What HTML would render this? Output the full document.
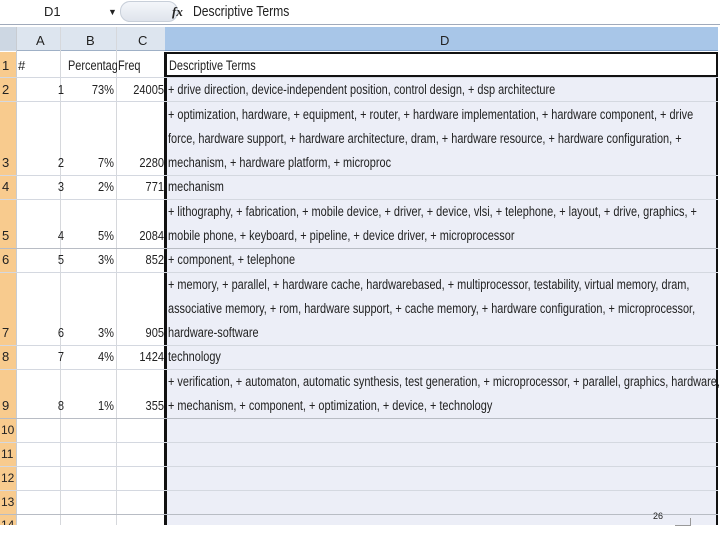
<!DOCTYPE html>
<html><head><meta charset="utf-8"><style>
body{margin:0;width:720px;height:540px;background:#fff;position:relative;overflow:hidden;font-family:"Liberation Sans",sans-serif;font-size:13px;color:#222}
div{position:absolute;box-sizing:border-box}
.t{white-space:nowrap;height:16px;line-height:16px}
.d{transform:scaleX(0.81);transform-origin:0 50%;font-size:13.5px}
.hl{height:1px;left:0;width:718px;background:#d4d8e0}
.r{text-align:right;transform:scaleX(0.85);transform-origin:100% 50%}
</style></head><body>
<div class="t" style="left:44px;top:4px">D1</div>
<div class="t" style="left:108px;top:4px;font-size:9px">▼</div>
<div style="left:120px;top:1px;width:58px;height:21px;border-radius:10px;background:linear-gradient(#f4f6fa,#dfe4ec);border:1px solid #c8cfd9"></div>
<div class="t" style="left:172px;top:4px;font-family:'Liberation Serif',serif;font-style:italic;font-weight:bold">fx</div>
<div class="t d" style="left:193px;top:4px;font-size:15px">Descriptive Terms</div>
<div style="left:0;top:24px;width:720px;height:1px;background:#a0aabb"></div>
<div style="left:0;top:27px;width:718px;height:24px;background:#dde5ef;border-bottom:1px solid #9fb0c6"></div>
<div style="left:165px;top:27px;width:553px;height:24px;background:#a8c6e8;border-bottom:1px solid #7f9fc8"></div>
<div style="left:0;top:27px;width:16px;height:24px;background:#cdd7e3"></div>
<div style="left:16px;top:27px;width:1px;height:498px;background:#c8ccd2"></div>
<div style="left:60px;top:27px;width:1px;height:498px;background:#d6d8dc"></div>
<div style="left:116px;top:27px;width:1px;height:498px;background:#d6d8dc"></div>
<div class="t" style="left:36px;top:33px">A</div>
<div class="t" style="left:86px;top:33px">B</div>
<div class="t" style="left:138px;top:33px">C</div>
<div class="t" style="left:440px;top:33px">D</div>
<div style="left:0;top:52px;width:16px;height:473px;background:#f8cb8e"></div>
<div style="left:165px;top:52px;width:553px;height:473px;background:#eceef7"></div>
<div style="left:164px;top:52px;width:3px;height:473px;background:#111"></div>
<div style="left:716px;top:52px;width:2px;height:473px;background:#111"></div>
<div style="left:165px;top:52px;width:553px;height:25px;background:#fff;border:2px solid #111"></div>
<div class="hl" style="top:77px"></div>
<div class="hl" style="top:101px"></div>
<div class="hl" style="top:175px"></div>
<div class="hl" style="top:199px"></div>
<div class="hl" style="top:248px;background:#b8bcc4"></div>
<div class="hl" style="top:272px"></div>
<div class="hl" style="top:345px"></div>
<div class="hl" style="top:369px"></div>
<div class="hl" style="top:418px;background:#b8bcc4"></div>
<div class="hl" style="top:442px"></div>
<div class="hl" style="top:466px"></div>
<div class="hl" style="top:490px"></div>
<div class="hl" style="top:514px;background:#b8bcc4"></div>
<div class="t" style="left:2px;top:58px">1</div>
<div class="t" style="left:2px;top:82px">2</div>
<div class="t" style="left:2px;top:155px">3</div>
<div class="t" style="left:2px;top:179px">4</div>
<div class="t" style="left:2px;top:228px">5</div>
<div class="t" style="left:2px;top:252px">6</div>
<div class="t" style="left:2px;top:325px">7</div>
<div class="t" style="left:2px;top:349px">8</div>
<div class="t" style="left:2px;top:398px">9</div>
<div class="t" style="left:1px;top:422px;font-size:12px">10</div>
<div class="t" style="left:1px;top:446px;font-size:12px">11</div>
<div class="t" style="left:1px;top:470px;font-size:12px">12</div>
<div class="t" style="left:1px;top:494px;font-size:12px">13</div>
<div class="t" style="left:1px;top:517px;font-size:12px;height:8px;overflow:hidden">14</div>
<div class="t" style="left:18px;top:58px">#</div>
<div style="left:68px;top:58px;width:49px;height:16px;overflow:hidden"><div class="t d" style="left:0;top:0">Percentage</div></div>
<div class="t d" style="left:118px;top:58px">Freq</div>
<div class="t d" style="left:169px;top:58px">Descriptive Terms</div>
<div class="t r" style="left:16px;width:48px;top:82px">1</div><div class="t r" style="left:60px;width:54px;top:82px">73%</div><div class="t r" style="left:116px;width:48px;top:82px">24005</div>
<div class="t r" style="left:16px;width:48px;top:155px">2</div><div class="t r" style="left:60px;width:54px;top:155px">7%</div><div class="t r" style="left:116px;width:48px;top:155px">2280</div>
<div class="t r" style="left:16px;width:48px;top:179px">3</div><div class="t r" style="left:60px;width:54px;top:179px">2%</div><div class="t r" style="left:116px;width:48px;top:179px">771</div>
<div class="t r" style="left:16px;width:48px;top:228px">4</div><div class="t r" style="left:60px;width:54px;top:228px">5%</div><div class="t r" style="left:116px;width:48px;top:228px">2084</div>
<div class="t r" style="left:16px;width:48px;top:252px">5</div><div class="t r" style="left:60px;width:54px;top:252px">3%</div><div class="t r" style="left:116px;width:48px;top:252px">852</div>
<div class="t r" style="left:16px;width:48px;top:325px">6</div><div class="t r" style="left:60px;width:54px;top:325px">3%</div><div class="t r" style="left:116px;width:48px;top:325px">905</div>
<div class="t r" style="left:16px;width:48px;top:349px">7</div><div class="t r" style="left:60px;width:54px;top:349px">4%</div><div class="t r" style="left:116px;width:48px;top:349px">1424</div>
<div class="t r" style="left:16px;width:48px;top:398px">8</div><div class="t r" style="left:60px;width:54px;top:398px">1%</div><div class="t r" style="left:116px;width:48px;top:398px">355</div>
<div class="t d" style="left:168px;top:82px">+ drive direction, device-independent position, control design, + dsp architecture</div>
<div class="t d" style="left:168px;top:107px">+ optimization, hardware, + equipment, + router, + hardware implementation, + hardware component, + drive</div>
<div class="t d" style="left:168px;top:131px">force, hardware support, + hardware architecture, dram, + hardware resource, + hardware configuration, +</div>
<div class="t d" style="left:168px;top:155px">mechanism, + hardware platform, + microproc</div>
<div class="t d" style="left:168px;top:179px">mechanism</div>
<div class="t d" style="left:168px;top:204px">+ lithography, + fabrication, + mobile device, + driver, + device, vlsi, + telephone, + layout, + drive, graphics, +</div>
<div class="t d" style="left:168px;top:228px">mobile phone, + keyboard, + pipeline, + device driver, + microprocessor</div>
<div class="t d" style="left:168px;top:252px">+ component, + telephone</div>
<div class="t d" style="left:168px;top:277px">+ memory, + parallel, + hardware cache, hardwarebased, + multiprocessor, testability, virtual memory, dram,</div>
<div class="t d" style="left:168px;top:301px">associative memory, + rom, hardware support, + cache memory, + hardware configuration, + microprocessor,</div>
<div class="t d" style="left:168px;top:325px">hardware-software</div>
<div class="t d" style="left:168px;top:349px">technology</div>
<div class="t d" style="left:168px;top:374px">+ verification, + automaton, automatic synthesis, test generation, + microprocessor, + parallel, graphics, hardware,</div>
<div class="t d" style="left:168px;top:398px">+ mechanism, + component, + optimization, + device, + technology</div>
<div class="t" style="left:653px;top:508px;font-size:9px">26</div>
<div style="left:675px;top:525px;width:16px;height:1px;background:#999"></div>
<div style="left:690px;top:518px;width:1px;height:8px;background:#999"></div>
</body></html>
